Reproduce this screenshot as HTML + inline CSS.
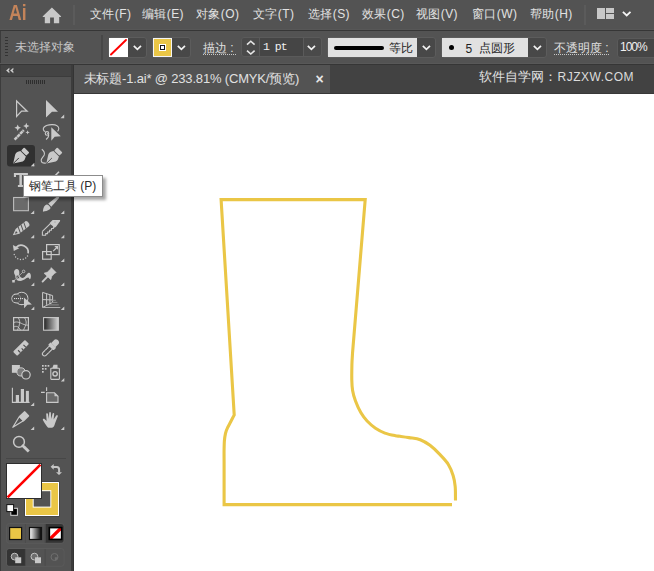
<!DOCTYPE html>
<html><head><meta charset="utf-8">
<style>
*{margin:0;padding:0;box-sizing:border-box}
html,body{width:654px;height:571px;overflow:hidden;background:#535353;font-family:"Liberation Sans",sans-serif}
.a{position:absolute}
.t{position:absolute;white-space:nowrap;line-height:1}
.menu{color:#e2e2e2;font-size:12px;top:7.5px;letter-spacing:0.4px}
.dd{position:absolute;background:#474747;border:1px solid #4c4c4c;border-radius:3px}
.chev{position:absolute;width:7px;height:7px;border-right:1.6px solid #e8e8e8;border-bottom:1.6px solid #e8e8e8;transform:rotate(45deg)}
</style></head><body>
<!-- menu bar -->
<div class="a" style="left:0;top:0;width:654px;height:29px;background:#535353"></div>
<div class="t" style="left:8.5px;top:2.4px;font-size:22px;font-weight:bold;color:#c4845a;transform:scaleX(0.8);transform-origin:0 0">Ai</div>
<svg class="a" style="left:42px;top:7px" width="20" height="17" viewBox="0 0 20 17"><path d="M9.9 0.5 L19 9.2 C19.3 9.6 19 10 18.6 10 L17.2 10 V16.2 H11.9 V10.4 H8.1 V16.2 H2.8 V10 H1.2 C0.8 10 0.5 9.6 0.8 9.2 Z" fill="#c8c8c8"/></svg>
<div class="a" style="left:73px;top:5px;width:2px;height:20px;background:#5b5b5b"></div>
<div class="t menu" style="left:90px">文件(F)</div>
<div class="t menu" style="left:142px">编辑(E)</div>
<div class="t menu" style="left:196px">对象(O)</div>
<div class="t menu" style="left:253px">文字(T)</div>
<div class="t menu" style="left:308px">选择(S)</div>
<div class="t menu" style="left:362px">效果(C)</div>
<div class="t menu" style="left:416px">视图(V)</div>
<div class="t menu" style="left:472px">窗口(W)</div>
<div class="t menu" style="left:530px">帮助(H)</div>
<div class="a" style="left:584px;top:5px;width:2px;height:20px;background:#5b5b5b"></div>
<div class="a" style="left:597px;top:8px;width:8px;height:11px;background:#c8c8c8"></div>
<div class="a" style="left:606px;top:8px;width:8px;height:5px;background:#c8c8c8"></div>
<div class="a" style="left:606px;top:14px;width:8px;height:5px;background:#c8c8c8"></div>
<svg class="a" style="left:622px;top:11px" width="10" height="6"><path d="M0.9 0.9 L4.7 4.5 L8.5 0.9" fill="none" stroke="#f4f4f4" stroke-width="1.8"/></svg>

<div class="a" style="left:0;top:29px;width:654px;height:1px;background:#575757"></div>
<div class="a" style="left:0;top:30px;width:654px;height:1px;background:#363636"></div>
<!-- control bar -->
<div class="a" style="left:0;top:31px;width:654px;height:33px;background:#535353"></div>
<div class="a" style="left:0;top:31px;width:1px;height:33px;background:#3c3c3c"></div>

<!-- control bar content -->
<div class="a" style="left:5px;top:37px;width:3px;height:21px;background:repeating-linear-gradient(#333 0 1px,transparent 1px 3px)"></div>
<div class="t" style="left:15px;top:41px;font-size:12px;color:#c6c6c6">未选择对象</div>
<div class="a" style="left:101px;top:35px;width:2px;height:25px;background:#474747"></div>
<!-- stroke swatch none -->
<div class="a" style="left:108px;top:37px;width:39px;height:21px;border:1px solid #5c5c5c;border-radius:3px;background:#484848"></div>
<div class="a" style="left:109px;top:38px;width:19px;height:19px;background:#fff"></div>
<svg class="a" style="left:109px;top:38px" width="19" height="19"><line x1="2" y1="16.5" x2="17" y2="2" stroke="#ff0000" stroke-width="1.9" stroke-linecap="round"/></svg>
<svg class="a" style="left:133px;top:45px" width="9" height="6"><path d="M0.8 0.8 L4.4 4.3 L8 0.8" fill="none" stroke="#f2f2f2" stroke-width="1.7"/></svg>
<!-- fill swatch -->
<div class="a" style="left:152px;top:37px;width:39px;height:21px;border:1px solid #5c5c5c;border-radius:3px;background:#484848"></div>
<div class="a" style="left:153px;top:38px;width:19px;height:19px;background:#eac646;border:1px solid #f4f4f4"></div>
<div class="a" style="left:159px;top:44px;width:7px;height:7.4px;background:#fff"></div>
<div class="a" style="left:160px;top:45px;width:5px;height:5.3px;border:1.2px solid #1a1a1a;background:#fff"></div>
<svg class="a" style="left:177px;top:45px" width="9" height="6"><path d="M0.8 0.8 L4.4 4.3 L8 0.8" fill="none" stroke="#f2f2f2" stroke-width="1.7"/></svg>
<!-- stroke weight -->
<div class="t" style="left:203px;top:41.5px;font-size:12px;color:#e0e0e0">描边 :</div>
<div class="a" style="left:203px;top:54px;width:33px;height:1px;background:repeating-linear-gradient(90deg,#c8c8c8 0 1px,transparent 1px 2px)"></div>
<div class="a" style="left:241px;top:37px;width:81px;height:20px;border:1px solid #5a5a5a;border-radius:3px;background:#4a4a4a"></div>
<div class="a" style="left:259px;top:38px;width:45px;height:18px;background:#454545;border-left:1px solid #5a5a5a;border-right:1px solid #5a5a5a"></div>
<svg class="a" style="left:246px;top:40px" width="10" height="16"><path d="M1 4.6 L4.8 1.2 L8.6 4.6 M1 10.6 L4.8 14 L8.6 10.6" fill="none" stroke="#e6e6e6" stroke-width="1.6"/></svg>
<div class="t" style="left:263px;top:41px;font-size:11.5px;color:#f0f0f0;font-family:'Liberation Mono',monospace;letter-spacing:-1px">1 pt</div>
<svg class="a" style="left:307px;top:45px" width="9" height="6"><path d="M0.8 0.8 L4.4 4.3 L8 0.8" fill="none" stroke="#f2f2f2" stroke-width="1.7"/></svg>
<!-- stroke profile -->
<div class="a" style="left:327px;top:37px;width:109px;height:21px;border:1px solid #5c5c5c;border-radius:3px;background:#484848"></div>
<div class="a" style="left:328px;top:38px;width:89px;height:19px;background:#e1e1e1"></div>
<div class="a" style="left:334px;top:46.3px;width:50px;height:3.7px;background:#000;border-radius:2px"></div>
<div class="t" style="left:389px;top:42px;font-size:12px;color:#1e1e1e">等比</div>
<svg class="a" style="left:422px;top:45px" width="9" height="6"><path d="M0.8 0.8 L4.4 4.3 L8 0.8" fill="none" stroke="#f2f2f2" stroke-width="1.7"/></svg>
<!-- brush -->
<div class="a" style="left:441px;top:37px;width:106px;height:21px;border:1px solid #5c5c5c;border-radius:3px;background:#484848"></div>
<div class="a" style="left:442px;top:38px;width:86px;height:19px;background:#e1e1e1"></div>
<div class="a" style="left:449px;top:45px;width:5.4px;height:5.4px;background:#000;border-radius:50%"></div>
<div class="t" style="left:465.5px;top:42.5px;font-size:12px;color:#1e1e1e">5</div>
<div class="t" style="left:479px;top:42px;font-size:12px;color:#1e1e1e">点圆形</div>
<svg class="a" style="left:533px;top:45px" width="9" height="6"><path d="M0.8 0.8 L4.4 4.3 L8 0.8" fill="none" stroke="#f2f2f2" stroke-width="1.7"/></svg>
<!-- opacity -->
<div class="t" style="left:554px;top:42px;font-size:12px;color:#e0e0e0">不透明度 :</div>
<div class="a" style="left:554px;top:54px;width:56px;height:1px;background:repeating-linear-gradient(90deg,#c8c8c8 0 1px,transparent 1px 2px)"></div>
<div class="a" style="left:617px;top:37.5px;width:45px;height:20px;border:1px solid #5a5a5a;border-radius:3px;background:#454545"></div>
<div class="t" style="left:620px;top:41px;font-size:12px;color:#f0f0f0;letter-spacing:-1px">100%</div>

<div class="a" style="left:0;top:63px;width:654px;height:1px;background:#585858"></div>
<div class="a" style="left:0;top:64px;width:654px;height:1px;background:#363636"></div>
<!-- tab bar -->
<div class="a" style="left:74px;top:65px;width:580px;height:28px;background:#424242"></div>
<div class="a" style="left:74px;top:65px;width:256px;height:28px;background:#535353"></div>
<div class="t" style="left:83.5px;top:72px;font-size:13px;color:#e0e0e0;letter-spacing:-0.17px">未标题-1.ai* @ 233.81% (CMYK/预览)</div>
<div class="t" style="left:315.5px;top:71.5px;font-size:14px;font-weight:bold;color:#e8e8e8">×</div>
<div class="t" style="left:479px;top:70px;font-size:13px;color:#e0e0e0">软件自学网：</div>
<div class="t" style="left:557.5px;top:71px;font-size:12px;color:#dcdcdc;letter-spacing:0.5px">RJZXW.COM</div>
<!-- canvas -->
<div class="a" style="left:74px;top:93px;width:580px;height:1px;background:#383838"></div>
<div class="a" style="left:74px;top:94px;width:580px;height:477px;background:#fff"></div>
<!-- toolbar -->
<div class="a" style="left:0;top:65px;width:74px;height:506px;background:#3c3c3c"></div>
<div class="a" style="left:1px;top:65px;width:70px;height:11px;background:#444444"></div>
<div class="a" style="left:1px;top:77px;width:70px;height:494px;background:#535353"></div>
<div class="a" style="left:73px;top:65px;width:1px;height:506px;background:#343434"></div>
<svg class="a" style="left:5px;top:67px" width="10" height="7"><path d="M4.2 1.2 L1.4 3.5 L4.2 5.8 L4.2 4.4 L3.2 3.5 L4.2 2.6 Z M8.2 1.2 L5.4 3.5 L8.2 5.8 L8.2 4.4 L7.2 3.5 L8.2 2.6 Z" fill="#d4d4d4" stroke="#d4d4d4" stroke-width="0.4"/></svg>
<div class="a" style="left:26px;top:80px;width:20px;height:4px;background:repeating-linear-gradient(90deg,#2e2e2e 0 1px,transparent 1px 2px)"></div>

<svg class="a" style="left:0;top:0" width="74" height="571" viewBox="0 0 74 571">
<g fill="#c9c9c9" stroke="none">
<!-- small triangles -->
<path d="M60.5 118.2H64.2V114.5Z M30.8 166.2H34.3V162.7Z M30.6 213.9H34.2V210.5Z M60.8 213.9H64.3V210.5Z M30.6 238.2H34.2V234.8Z M60.8 238.2H64.3V234.8Z M31 262H34.3V258.6Z M60.8 262H64.3V258.6Z M31 286H34.3V282.6Z M60.8 286H64.3V282.6Z M31 310H34.3V306.6Z M60.8 310H64.3V306.6Z M60.8 381.5H64.3V378.1Z M30.6 406H34.2V402.6Z M30.6 430H34.2V426.6Z M60.8 430H64.3V426.6Z"/>
</g>
<!-- selection -->
<path d="M16.6 101 L27.2 111.2 L21.6 111.2 L16.6 116.4 Z" fill="none" stroke="#c9c9c9" stroke-width="1.2" stroke-linejoin="miter"/>
<path d="M46 100 L58 111.8 L52 111.8 L46 117.5 Z" fill="#c9c9c9"/>
<!-- magic wand -->
<line x1="14.6" y1="139.6" x2="23.8" y2="130.2" stroke="#c9c9c9" stroke-width="2.5" stroke-dasharray="3.5 0.45"/>
<path d="M17.7 124.4 L18.7 126.7 L21 127.7 L18.7 128.7 L17.7 131 L16.7 128.7 L14.4 127.7 L16.7 126.7Z M26.3 122.8 L27.2 125.1 L29.5 126 L27.2 126.9 L26.3 129.2 L25.4 126.9 L23.1 126 L25.4 125.1Z M27.6 130.2 L28.2 131.8 L29.8 132.4 L28.2 133 L27.6 134.6 L27 133 L25.4 132.4 L27 131.8Z" fill="#c9c9c9"/>
<!-- lasso -->
<path d="M45.2 131.6 C43.2 130.8 42.6 128.6 44.2 127 C46 125.2 49.5 124.5 52.5 124.6 C56 124.7 58.8 126.3 58.8 128.5 C58.8 129.8 58.2 130.6 57.6 131.3" fill="none" stroke="#c9c9c9" stroke-width="1.1"/>
<circle cx="47" cy="133.4" r="1.75" fill="none" stroke="#c9c9c9" stroke-width="1.1"/>
<circle cx="47.4" cy="133.4" r="0.55" fill="#c9c9c9"/>
<path d="M48.6 134.6 C49 136.3 47.6 138.2 46.1 139.5" fill="none" stroke="#c9c9c9" stroke-width="1.1"/>
<path d="M51.3 127.3 L60.8 136.3 L54.7 136.8 L51.3 140.7 Z" fill="#c9c9c9"/>
<!-- pen selected bg -->
<rect x="7" y="145" width="28" height="21.6" rx="3" fill="#303030"/>
<path d="M30.8 166.2H34.3V162.7Z" fill="#d0d0d0"/>
<g transform="translate(13.2,163.6) rotate(45)">
<path d="M0 0 L-4.6 -7.2 C-5.5 -8.6 -5.6 -10.4 -5 -11.6 L-3.9 -14 L3.9 -14 L5 -11.6 C5.6 -10.4 5.5 -8.6 4.6 -7.2 Z" fill="#c9c9c9"/>
<rect x="-3.7" y="-19.2" width="7.4" height="4.4" rx="0.9" fill="#c9c9c9"/>
<line x1="0" y1="-0.3" x2="0" y2="-8" stroke="#303030" stroke-width="0.9"/>
</g>
<!-- curvature pen -->
<g transform="translate(46.3,163.6) rotate(45)">
<path d="M0 0 L-4.6 -7.2 C-5.5 -8.6 -5.6 -10.4 -5 -11.6 L-3.9 -14 L3.9 -14 L5 -11.6 C5.6 -10.4 5.5 -8.6 4.6 -7.2 Z" fill="#c9c9c9"/>
<rect x="-3.7" y="-19.2" width="7.4" height="4.4" rx="0.9" fill="#c9c9c9"/>
<line x1="0" y1="-0.3" x2="0" y2="-8" stroke="#535353" stroke-width="0.9"/>
</g>
<path d="M41.8 149.2 C43.5 150.5 45 152.5 44.2 155 C43.3 157.3 41 158 41.2 160.8 C41.4 162.8 43.5 163.3 45.8 163.1" fill="none" stroke="#c9c9c9" stroke-width="1.1"/>
<!-- type -->
<path d="M13.9 173 H27.9 V177.1 H25.8 V175.1 H21.9 V185 H22.9 V187.1 H17.9 V185 H19.4 V175.1 H16 V177.1 H13.9 Z" fill="#c9c9c9"/>
<line x1="59" y1="171.8" x2="45" y2="186" stroke="#c9c9c9" stroke-width="1.6"/>
<!-- rectangle -->
<rect x="13.6" y="197.5" width="14.8" height="13.2" fill="#6a6a6a" stroke="#bdbdbd" stroke-width="1.1"/>
<!-- paintbrush -->
<g transform="translate(42.9,211.7) rotate(-43.4)">
<path d="M0 0 C1.8 -1.8 3.8 -3.1 6.2 -3.1 C7.8 -3.1 8.6 -2.2 8.6 -0.8 L8.6 1.2 C8.6 2.4 7.6 3 6.2 2.9 C4.2 2.7 2 1.4 0 0 Z" fill="#c9c9c9"/>
<path d="M9.5 -2.2 L20.8 -1.3 C22.2 -1.2 22.2 1.2 20.8 1.3 L9.5 2.2 Z" fill="#c9c9c9"/>
</g>
<!-- shaper striped pencil -->
<g transform="translate(12.8,235.2) rotate(-38.7)">
<path d="M0 0 L6 -3 L18.6 -3 C20.6 -3 20.6 3 18.6 3 L6 3 Z" fill="#c9c9c9"/>
<path d="M2.4 0 L5.2 -1.3 L5.2 1.3 Z" fill="#535353"/>
<path d="M7.2 3.2 L9.4 -3.2 M10.8 3.2 L13 -3.2 M14.4 3.2 L16.6 -3.2" stroke="#535353" stroke-width="1"/>
</g>
<!-- eraser-like -->
<path d="M42.4 231.4 L50.6 223.4 M42.4 231.4 V235.3 H45.6 L45.83 233.63 L47.52 233.60 L47.75 231.93 L49.44 231.90 L49.67 230.23 L51.36 230.20 L51.59 228.53 L53.28 228.50 L53.51 226.83 L55.20 226.80" fill="none" stroke="#c9c9c9" stroke-width="1.1" stroke-linejoin="miter"/>
<path d="M49.6 223 L52.6 220 L60.2 220.1 L59.8 221.6 L56 226.8 L54.6 227.6 L50.8 224.4 Z" fill="#c9c9c9"/>
<circle cx="55" cy="222" r="0.6" fill="#8a8a8a"/>
<!-- rotate -->
<path d="M16.25 247.35 A7.0 7.0 0 0 1 28.13 253.27" fill="none" stroke="#c9c9c9" stroke-width="1.7"/>
<path d="M12.9 245 L19.2 248.2 L13.8 251 Z" fill="#c9c9c9"/>
<g fill="#c9c9c9"><circle cx="27.52" cy="255.95" r="0.7"/><circle cx="25.69" cy="258.05" r="0.7"/><circle cx="23.21" cy="259.32" r="0.7"/><circle cx="20.44" cy="259.56" r="0.7"/><circle cx="17.77" cy="258.75" r="0.7"/><circle cx="15.61" cy="256.99" r="0.7"/><circle cx="14.26" cy="254.56" r="0.7"/></g>
<!-- scale -->
<rect x="46.6" y="244.6" width="12.6" height="10" fill="none" stroke="#c9c9c9" stroke-width="1.2"/>
<rect x="42.6" y="251.6" width="8.6" height="7.6" fill="none" stroke="#c9c9c9" stroke-width="1.2"/>
<path d="M53.2 251.2 L57.3 247" stroke="#c9c9c9" stroke-width="1.2"/>
<path d="M54.3 246 L58 246 L58 249.7 Z" fill="#c9c9c9"/>
<!-- width tool -->
<path d="M14.2 273.6 C13.6 271.2 14.6 269 16.6 269 C18.6 269 19.6 271 19.3 273.6 C19.1 276 20.6 278.2 22.6 278 C25 277.8 26.4 274.2 28.2 273 C29.6 272.1 30.9 273.5 30.9 276 C30.9 278 30.3 279.3 29.8 279.3 C29.3 279.3 29 277.6 28 277.6 C26.5 277.6 24 281 20.2 281 C17.2 281 15.6 279.2 15.6 277.2 C15.6 275.8 14.6 274.8 14.2 273.6 Z" fill="#c9c9c9"/>
<line x1="13.6" y1="281" x2="23.6" y2="271.5" stroke="#535353" stroke-width="1.6"/>
<line x1="13.6" y1="281" x2="23.6" y2="271.5" stroke="#c9c9c9" stroke-width="0.7"/>
<circle cx="17.8" cy="277" r="1.9" fill="#535353" stroke="#c9c9c9" stroke-width="0.8"/>
<line x1="16.8" y1="278" x2="18.8" y2="276" stroke="#c9c9c9" stroke-width="0.7"/>
<rect x="12.2" y="280" width="2.6" height="2.5" fill="#c9c9c9"/>
<circle cx="23.6" cy="271.4" r="1.3" fill="#535353" stroke="#c9c9c9" stroke-width="0.8"/>
<!-- puppet pin -->
<path d="M44 273.2 L47.5 272 L50.8 268.8 L51.2 267.6 L56.2 272.6 L55 273 L51.8 276.3 L50.8 279.7 Z" fill="#c9c9c9" stroke="#c9c9c9" stroke-width="0.6" stroke-linejoin="round"/>
<line x1="47.2" y1="276.8" x2="42.6" y2="281.6" stroke="#c9c9c9" stroke-width="1.9" stroke-linecap="round"/>
<!-- shape builder -->
<circle cx="16.3" cy="298.5" r="4.4" fill="none" stroke="#c9c9c9" stroke-width="1.1"/>
<circle cx="21.7" cy="298.4" r="6.2" fill="none" stroke="#c9c9c9" stroke-width="1.1"/>
<circle cx="16.3" cy="298.5" r="3.85" fill="#535353"/>
<circle cx="21.7" cy="298.4" r="5.65" fill="#535353"/>
<path d="M16.3 294.1 A4.4 4.4 0 0 1 16.3 302.9" fill="none" stroke="#8c8c8c" stroke-width="0.8"/>
<g fill="#d8d8d8"><rect x="14" y="298" width="1.1" height="1.1"/><rect x="15.9" y="298" width="1.1" height="1.1"/><rect x="17.9" y="298" width="1.1" height="1.1"/><rect x="20" y="298" width="1.1" height="1.1"/><rect x="21.9" y="298" width="1.1" height="1.1"/></g>
<path d="M23.9 297.4 L31.9 304.6 L27.3 304.8 L24.1 308.3 Z" fill="#c9c9c9"/>
<!-- perspective grid -->
<path d="M42.6 292.4 V307.4 L52.6 302.4 V295.6 Z M42.6 299.6 L52.6 299.9 M46.6 293.7 V305.4 M49.9 294.8 V303.8" fill="none" stroke="#c9c9c9" stroke-width="1"/>
<path d="M50.5 300.3 H55.8 M49.6 302.4 H57.4 M46.4 304.9 H58.8" stroke="#8e8e8e" stroke-width="1"/>
<path d="M42.6 307.5 H60.3" stroke="#b0b0b0" stroke-width="1"/>
<!-- mesh -->
<rect x="13.6" y="317.6" width="14.8" height="12.6" fill="none" stroke="#c9c9c9" stroke-width="1.2"/>
<path d="M18 317.6 C21 321 19.5 325 17.5 330.2 M13.6 322.5 C18 321 20 323 24 324.5 C26 325.2 27 325.3 28.4 325 M24.5 317.6 C26.5 320.5 26.8 323.5 25.2 326.5 C24 329 23.6 329.6 23.6 330.2 M13.6 327 C16 325.8 18.5 326 20.5 330.2" fill="none" stroke="#c9c9c9" stroke-width="0.9"/>
<!-- gradient -->
<defs><linearGradient id="gr" x1="0" x2="1"><stop offset="0" stop-color="#222"/><stop offset="1" stop-color="#d6d6d6"/></linearGradient>
<linearGradient id="gr2" x1="0" x2="1"><stop offset="0" stop-color="#fff"/><stop offset="1" stop-color="#111"/></linearGradient></defs>
<rect x="43.6" y="317.6" width="14.8" height="12.6" fill="url(#gr)" stroke="#c9c9c9" stroke-width="1.1"/>
<!-- ruler -->
<g transform="translate(21.05,347.85) rotate(-45)">
<rect x="-8.4" y="-2.9" width="16.8" height="5.8" rx="0.9" fill="#c9c9c9"/>
<path d="M-3.8 2.9 V-0.4 M0 2.9 V0.8 M3.8 2.9 V-0.4" stroke="#4a4a4a" stroke-width="1.1"/>
</g>
<!-- eyedropper -->
<g transform="translate(43.4,355) rotate(-45)">
<path d="M1.6 -2.1 H11 V2.1 H1.6 A2.1 2.1 0 0 1 1.6 -2.1 Z" fill="#535353" stroke="#c9c9c9" stroke-width="1.1"/>
<path d="M5 -1.5 V1.5 M7 -1.5 V1.5 M9 -1.5 V1.5" stroke="#444" stroke-width="0.8"/>
<rect x="10.5" y="-3.9" width="3.6" height="7.8" rx="0.6" fill="#c9c9c9"/>
<path d="M14 -2.9 H18.5 C21.5 -2.9 21.5 2.9 18.5 2.9 H14 Z" fill="#c9c9c9"/>
</g>
<!-- blend -->
<rect x="11.9" y="365" width="8" height="7.8" fill="#c9c9c9"/>
<circle cx="21" cy="371.9" r="4.1" fill="#7a7a7a" stroke="#c9c9c9" stroke-width="1"/>
<circle cx="26" cy="374.8" r="4.2" fill="#535353" stroke="#c9c9c9" stroke-width="1.2"/>
<!-- symbol sprayer -->
<g fill="#c9c9c9"><rect x="42" y="365" width="1.7" height="1.7"/><rect x="44.8" y="365" width="1.7" height="1.7"/><rect x="47.6" y="365" width="1.7" height="1.7"/><rect x="42" y="368" width="1.7" height="1.7"/><rect x="44.8" y="368" width="1.7" height="1.7"/><rect x="42" y="371" width="1.7" height="1.7"/></g>
<rect x="50.8" y="368.2" width="8.6" height="11.2" rx="0.6" fill="none" stroke="#c9c9c9" stroke-width="1.1"/>
<path d="M52.2 368.2 L53.5 364.8 L57.5 364.8 L57.5 368.2 Z" fill="#c9c9c9"/>
<circle cx="55.1" cy="373.8" r="2.2" fill="none" stroke="#c9c9c9" stroke-width="1.4"/>
<!-- graph -->
<path d="M12.4 387.8 V402.4 H29.6" fill="none" stroke="#c9c9c9" stroke-width="1.1"/>
<rect x="15.8" y="395" width="3.2" height="7.4" fill="#c9c9c9"/>
<rect x="20.8" y="389" width="3.2" height="13.4" fill="#c9c9c9"/>
<rect x="25.9" y="390.9" width="3" height="11.5" fill="#c9c9c9"/>
<!-- artboard -->
<path d="M46.6 387.2 V391 M41 392.4 H44.8" stroke="#c9c9c9" stroke-width="1.1"/>
<path d="M46.6 392.8 H54.5 L58 396.3 V402.4 H46.6 Z" fill="#6a6a6a" stroke="#c9c9c9" stroke-width="1.1"/>
<path d="M54.5 392.8 V396.3 H58" fill="#c9c9c9"/>
<!-- slice -->
<g transform="translate(12.4,427.7) rotate(-44)">
<path d="M0.6 0 L12.8 -3.2 L12.8 2.6 Z" fill="none" stroke="#c9c9c9" stroke-width="1.2" stroke-linejoin="round"/>
<rect x="12.2" y="-3.7" width="8.4" height="7.2" rx="1" fill="#c9c9c9"/>
</g>
<!-- hand -->
<path d="M47 426.5 C45.5 424.5 43.5 421.5 42.9 420 C42.5 418.8 43.8 418.2 44.8 419.2 L46.6 421 L46.2 414.2 C46.1 413 47.8 412.8 48 414 L48.8 419 L49.2 412.8 C49.3 411.8 50.8 411.8 50.9 412.8 L51.2 419 L52.6 413.5 C52.9 412.6 54.3 412.8 54.2 413.9 L53.6 419.5 L56.2 415.6 C56.8 414.8 58.2 415.2 57.8 416.2 L55 423.5 C54.5 425.5 53.8 427.8 51 427.8 L49 427.8 C48.2 427.8 47.6 427.3 47 426.5Z" fill="#c9c9c9"/>
<!-- zoom -->
<circle cx="19" cy="441.9" r="5.4" fill="none" stroke="#c9c9c9" stroke-width="1.5"/>
<line x1="23" y1="445.9" x2="27.8" y2="450.6" stroke="#c9c9c9" stroke-width="2.8" stroke-linecap="square" stroke-dasharray="1.6 0.5"/>
<!-- separator -->
<rect x="6" y="458" width="60" height="1" fill="#474747"/>
</svg>

<!-- bottom swatches -->
<svg class="a" style="left:0;top:0" width="74" height="571" viewBox="0 0 74 571">
<defs><linearGradient id="g3" x1="0" x2="1"><stop offset="0" stop-color="#fff"/><stop offset="1" stop-color="#000"/></linearGradient></defs>
<!-- stroke swatch -->
<rect x="24.5" y="481.5" width="35" height="35" fill="#3a3a3a"/>
<rect x="25" y="482" width="34" height="34" fill="#fff"/>
<rect x="26" y="483" width="32" height="32" fill="#eac646"/>
<rect x="32.7" y="490.2" width="18.6" height="17.4" fill="#fff"/>
<rect x="33.7" y="491.2" width="16.6" height="15.4" fill="#535353"/>
<!-- fill swatch -->
<rect x="6" y="463" width="36" height="36" fill="#2e2e2e"/>
<rect x="7" y="464" width="34" height="34" fill="#fff"/>
<line x1="7.6" y1="497.4" x2="40.4" y2="464.6" stroke="#f00" stroke-width="2.6"/>
<!-- swap -->
<path d="M53 467 H56.8 C58.3 467 59.1 468 59.1 469.5 V472.6" fill="none" stroke="#c6c6c6" stroke-width="2"/>
<path d="M50.6 466.8 L53.7 463.9 L53.7 469.7 Z M59 475 L56 472.2 L62 472.2 Z" fill="#c6c6c6"/>
<!-- default -->
<rect x="10.8" y="508.3" width="6.6" height="7" fill="#000" stroke="#d8d8d8" stroke-width="1"/>
<rect x="6.8" y="504.6" width="6.8" height="7" fill="#fff" stroke="#111" stroke-width="1"/>
<!-- mode row -->
<rect x="6.5" y="523.5" width="57.6" height="19.8" rx="3" fill="none" stroke="#5a5a5a" stroke-width="1"/>
<path d="M45.5 524 H61.1 A2.6 2.6 0 0 1 63.6 526.6 V540.2 A2.6 2.6 0 0 1 61.1 542.8 H45.5 Z" fill="#343434"/>
<path d="M25.4 524 V543 M45.1 524 V543" stroke="#4b4b4b" stroke-width="1"/>
<rect x="9.6" y="527.5" width="12" height="12" fill="#eac646" stroke="#111" stroke-width="1.2"/>
<rect x="29.5" y="527.5" width="12" height="12" fill="url(#g3)" stroke="#111" stroke-width="1.2"/>
<rect x="49.3" y="527.5" width="12.4" height="12" fill="#fff" stroke="#111" stroke-width="1.2"/>
<line x1="50.3" y1="538.6" x2="60.9" y2="528.3" stroke="#f00" stroke-width="3.3"/>
<rect x="49.4" y="527.6" width="12.2" height="11.8" fill="none" stroke="#000" stroke-width="1.5"/>
<!-- draw mode row -->
<rect x="6.5" y="548.5" width="57.6" height="17.8" rx="3" fill="none" stroke="#5a5a5a" stroke-width="1"/>
<path d="M25.4 549 H9.6 A2.6 2.6 0 0 0 7 551.6 V563.2 A2.6 2.6 0 0 0 9.6 565.8 H25.4 Z" fill="#343434"/>
<path d="M25.4 549 V566 M45.1 549 V566" stroke="#4b4b4b" stroke-width="1"/>
<circle cx="14.6" cy="556.6" r="3.4" fill="#6d6d6d" stroke="#c4c4c4" stroke-width="1"/>
<rect x="15.2" y="557.3" width="6" height="5.9" fill="#c8c8c8"/>
<circle cx="34.4" cy="556.6" r="3.4" fill="#6d6d6d" stroke="#c4c4c4" stroke-width="1"/>
<rect x="35" y="557.3" width="6" height="5.9" fill="#c8c8c8"/>
<circle cx="54.5" cy="557" r="3.5" fill="none" stroke="#6e6e6e" stroke-width="1"/>
<path d="M54.8 557.3 H58 A3.3 3.3 0 0 1 54.8 560.5 Z" fill="#6e6e6e"/>
</svg>
<!-- tooltip -->
<div class="a" style="left:26px;top:178px;width:80px;height:22px;background:rgba(0,0,0,0.35);filter:blur(1.6px)"></div>
<div class="a" style="left:23px;top:175px;width:80px;height:22px;background:#fff;border:1px solid #8c8c8c"></div>
<div class="t" style="left:29px;top:179.5px;font-size:12px;color:#2c2c2c">钢笔工具 (P)</div>

<!-- boot -->
<svg class="a" style="left:0;top:0" width="654" height="571" viewBox="0 0 654 571">
<path d="M455.5 500.5 C455.4 498.2 455.6 490.8 455.2 486.6 C454.8 482.4 454.3 479.1 453.1 475.4 C451.9 471.7 450.4 467.7 448.2 464.2 C446.0 460.7 442.8 457.5 439.8 454.4 C436.8 451.2 433.3 447.8 430.0 445.3 C426.7 442.9 423.7 441.0 420.2 439.7 C416.7 438.4 412.4 438.2 409.0 437.6 C405.6 437.0 402.3 436.6 400.0 436.3 C397.7 436.0 397.9 436.2 395.4 435.7 C392.9 435.2 388.2 434.3 384.9 433.1 C381.6 431.9 378.5 430.3 375.5 428.3 C372.5 426.3 369.6 423.6 367.1 421.0 C364.7 418.4 362.7 415.9 360.8 412.6 C358.9 409.3 356.9 404.7 355.5 401.0 C354.1 397.3 353.2 394.0 352.6 390.5 C352.0 387.0 351.9 384.2 351.8 380.0 C351.7 375.8 351.8 369.7 351.9 365.0 C352.0 360.3 352.5 354.2 352.6 352.0 L365.2 199.6 L221.1 199.6 L234.2 415 C233.6 416.1 231.8 419.7 230.7 421.8 C229.6 423.9 228.5 425.7 227.6 427.6 C226.7 429.5 226.0 431.1 225.5 433.3 C225.0 435.5 224.6 438.1 224.4 440.7 C224.2 443.3 224.2 445.4 224.1 449.0 C224.0 452.6 224.1 459.8 224.1 462.0 L224.1 504.6 L452 504.6" fill="none" stroke="#eac646" stroke-width="3.1" stroke-linejoin="miter"/>
</svg>
</body></html>
